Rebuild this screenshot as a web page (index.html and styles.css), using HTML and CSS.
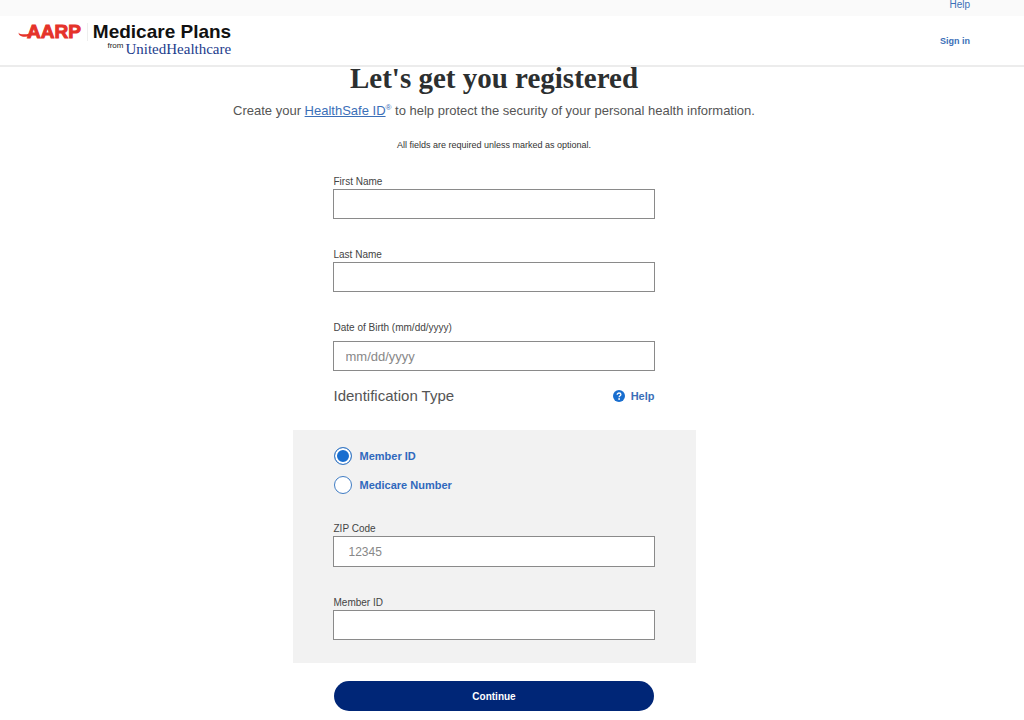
FILE: index.html
```
<!DOCTYPE html>
<html lang="en">
<head>
    <meta charset="UTF-8">
    <meta name="viewport" content="width=device-width, initial-scale=1.0">
    <title>Register | Medicare Plans</title>
    <link rel="stylesheet" href="styles.css">
</head>
<body>
    <div class="topbar">
        <a href="#">Help</a>
    </div>
    <header class="header">
        <a class="logo" href="#">
            <svg class="swoosh" width="12" height="8" viewBox="0 0 12 8" aria-hidden="true">
                <path d="M1 1.6 C0.8 2.6 2 3.2 4 3.3 C7 3.5 9.5 3 12 2.4 L12 4.8 C9.5 5.8 6.5 6 4 5.4 C1.6 4.8 0 3.2 1 1.6 Z" fill="#e5332a"/>
            </svg>
            <span class="logo-aarp">AARP</span>
            <span class="logo-plans">
                <span class="plans-name">Medicare Plans</span>
                <span class="plans-from"><small>from</small> <span class="plans-uhc">UnitedHealthcare</span></span>
            </span>
        </a>
        <a class="sign-in" href="#">Sign in</a>
    </header>

    <main>
        <h1>Let's get you registered</h1>
        <p class="intro">Create your <a href="#">HealthSafe ID</a><sup>®</sup> to help protect the security of your personal health information.</p>
        <p class="note">All fields are required unless marked as optional.</p>

        <form>
            <div class="field">
                <label for="firstName">First Name</label>
                <input type="text" id="firstName">
            </div>
            <div class="field">
                <label for="lastName">Last Name</label>
                <input type="text" id="lastName">
            </div>
            <div class="field field-date">
                <label for="birthDate">Date of Birth (mm/dd/yyyy)</label>
                <input type="text" id="birthDate" placeholder="mm/dd/yyyy">
            </div>

            <div class="id-heading">
                <h2>Identification Type</h2>
                <a class="help" href="#">
                    <svg width="12" height="12" viewBox="0 0 12 12" aria-hidden="true">
                        <circle cx="6" cy="6" r="6" fill="#196ecf"/>
                        <path d="M4.2 4.7 C4.2 2.4 7.9 2.5 7.9 4.6 C7.9 5.8 6.1 5.8 6.1 7.2" fill="none" stroke="#fff" stroke-width="1.3"/>
                        <circle cx="6.1" cy="9" r="0.9" fill="#fff"/>
                    </svg>
                    Help
                </a>
            </div>

            <div class="id-panel">
                <div class="radios">
                    <label><input type="radio" name="idType" checked> Member ID</label>
                    <label><input type="radio" name="idType"> Medicare Number</label>
                </div>
                <div class="field field-zip">
                    <label for="zip">ZIP Code</label>
                    <input type="text" id="zip" placeholder="12345">
                </div>
                <div class="field">
                    <label for="memberId">Member ID</label>
                    <input type="text" id="memberId">
                </div>
            </div>

            <button type="submit">Continue</button>
        </form>
    </main>
</body>
</html>
```
FILE: styles.css
```
* {
    box-sizing: border-box;
}

body {
    margin: 0;
    font-family: "Liberation Sans", Arial, sans-serif;
    color: #555;
    background-color: #fff;
}

a {
    color: #3b6fb8;
    text-decoration: none;
}

.topbar {
    height: 16px;
    padding-right: 54px;
    background-color: #fafafa;
    text-align: right;
    font-size: 10px;
    line-height: 10px;
}

.header {
    display: flex;
    justify-content: space-between;
    align-items: center;
    height: 51px;
    padding: 0 54px 0 18px;
    border-bottom: 2px solid #ececec;
}

.logo {
    display: flex;
    align-items: flex-start;
    height: 36px;
}

.swoosh {
    margin-top: 8px;
    margin-right: -3px;
}

.logo-aarp {
    padding-right: 6px;
    border-right: 1px solid #eee;
    font-size: 19px;
    line-height: 18px;
    font-weight: bold;
    color: #e5332a;
    -webkit-text-stroke: 1px #e5332a;
}

.logo-plans {
    display: flex;
    flex-direction: column;
    align-items: flex-end;
    padding-left: 5px;
}

.plans-name {
    font-size: 19px;
    line-height: 18px;
    font-weight: bold;
    color: #111;
}

.plans-from {
    display: flex;
    gap: 2px;
    line-height: 16px;
}

.plans-from small {
    font-size: 8px;
    line-height: 10px;
    color: #222;
}

.plans-uhc {
    font-family: "Liberation Serif", serif;
    font-size: 15px;
    color: #1d3c8c;
}

.sign-in {
    font-size: 9px;
    font-weight: bold;
}

main {
    padding-right: 36px;
    text-align: center;
}

h1 {
    margin: 0;
    font-family: "Liberation Serif", serif;
    font-size: 29px;
    line-height: 22px;
    color: #2c2f30;
}

.intro {
    margin: 14px 0 0;
    font-size: 13px;
    line-height: 16px;
}

.intro a {
    text-decoration: underline;
}

.intro sup {
    font-size: 8px;
    line-height: 0;
    color: #3b6fb8;
}

.note {
    margin: 20px 0 0;
    font-size: 9px;
    line-height: 12px;
    color: #333;
}

form {
    width: 100%;
    max-width: 403px;
    margin: 24px auto 0;
    padding: 0 0 9px;
    text-align: left;
}

.field {
    margin: 0 41px 29px 40px;
}

.field label {
    display: block;
    padding-left: 1px;
    font-size: 10px;
    line-height: 14px;
    color: #444;
}

.field input {
    display: block;
    width: 100%;
    height: 30px;
    padding: 0 12px;
    border: 1px solid #8a8a8a;
    border-radius: 0;
    background-color: #fff;
    font-family: inherit;
    font-size: 13px;
}

.field input::placeholder {
    color: #888;
}

.field-date {
    margin-bottom: 16px;
}

.field-date label {
    margin-bottom: 6px;
}

.field-zip input {
    height: 31px;
    padding: 0 15px;
    font-size: 12px;
}

.id-heading {
    display: flex;
    justify-content: space-between;
    align-items: center;
    margin: 0 41px 25px;
}

h2 {
    margin: 0;
    font-size: 15px;
    line-height: 18px;
    font-weight: normal;
}

.help {
    display: flex;
    align-items: center;
    gap: 6px;
    font-size: 11px;
    font-weight: bold;
}

.id-panel {
    padding: 17px 0 23px;
    background-color: #f2f2f2;
}

.id-panel .field:last-child {
    margin-bottom: 0;
}

.radios {
    display: flex;
    flex-direction: column;
    align-items: flex-start;
    gap: 11px;
    margin: 0 41px 28px;
}

.radios label {
    display: flex;
    align-items: center;
    gap: 8px;
    font-size: 11px;
    line-height: 18px;
    font-weight: bold;
    color: #3069bd;
}

.radios input {
    appearance: none;
    width: 18px;
    height: 18px;
    margin: 0;
    border: 1px solid #3f7cc4;
    border-radius: 50%;
    background-color: #fff;
}

.radios input:checked {
    background-color: #196ecf;
    box-shadow: inset 0 0 0 2px #fff;
}

button {
    display: block;
    width: calc(100% - 83px);
    height: 30px;
    margin: 18px auto 0;
    border: none;
    border-radius: 15px;
    background-color: #002677;
    color: #fff;
    font-family: inherit;
    font-size: 10px;
    font-weight: bold;
    cursor: pointer;
}
```
